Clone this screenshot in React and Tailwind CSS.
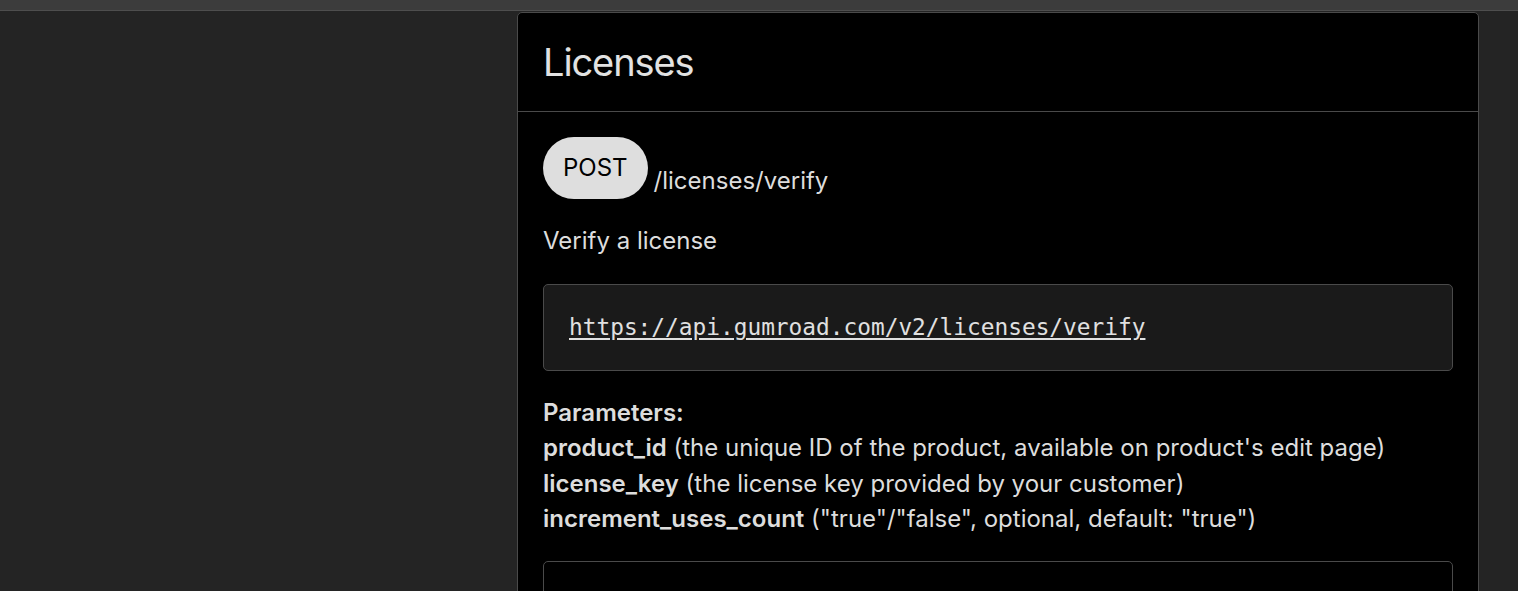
import React from "react";

export default function App() {
  const sans = { fontFamily: "Inter, 'Liberation Sans', sans-serif" };
  return (
    <div className="min-h-screen bg-[#242424] text-[#dddddd]" style={sans}>
      <div className="h-[10px] bg-[#3c3c3c]" />
      <div className="h-[1px] bg-[#4e4e4e]" />
      <div className="flex pt-[1px]">
        <div className="w-[517px] shrink-0" />
        <div className="w-[962px] shrink-0 rounded-t-[5px] border border-[#4a4a4a] bg-black">
          <div className="flex h-[99px] items-center border-b border-[#4a4a4a] px-[25px]">
            <h1 className="text-[38px] leading-none font-normal tracking-[-1.1px] text-[#e2e2e2]">Licenses</h1>
          </div>
          <div className="px-[25px] pt-[25px] pb-[40px]">
            <div className="flex items-end gap-[6px]">
              <span className="rounded-full bg-[#dedede] px-[20px] py-[13px] text-[24px] leading-[36px] text-black">
                POST
              </span>
              <span className="text-[24px] leading-[36px]">/licenses/verify</span>
            </div>
            <p className="mt-[24px] text-[24px] leading-[36px]">Verify a license</p>
            <div className="mt-[25px] rounded-[5px] border border-[#4a4a4a] bg-[#1a1a1a] p-[25px]">
              <a
                href="#"
                className="text-[22.8px] leading-[35px] text-[#e0e0e0] underline underline-offset-[3px]"
                style={{ fontFamily: "'DejaVu Sans Mono', 'Liberation Mono', monospace" }}
              >
                https://api.gumroad.com/v2/licenses/verify
              </a>
            </div>
            <div className="mt-[24px] text-[24px] leading-[35.33px]">
              <p className="font-semibold">Parameters:</p>
              <p>
                <strong className="font-semibold">product_id</strong> (the unique ID of the product, available on product's edit page)
              </p>
              <p>
                <strong className="font-semibold">license_key</strong> (the license key provided by your customer)
              </p>
              <p>
                <strong className="font-semibold">increment_uses_count</strong> ("true"/"false", optional, default: "true")
              </p>
            </div>
            <div className="mt-[25px] h-[200px] rounded-[5px] border border-[#4a4a4a] bg-black" />
          </div>
        </div>
      </div>
    </div>
  );
}
